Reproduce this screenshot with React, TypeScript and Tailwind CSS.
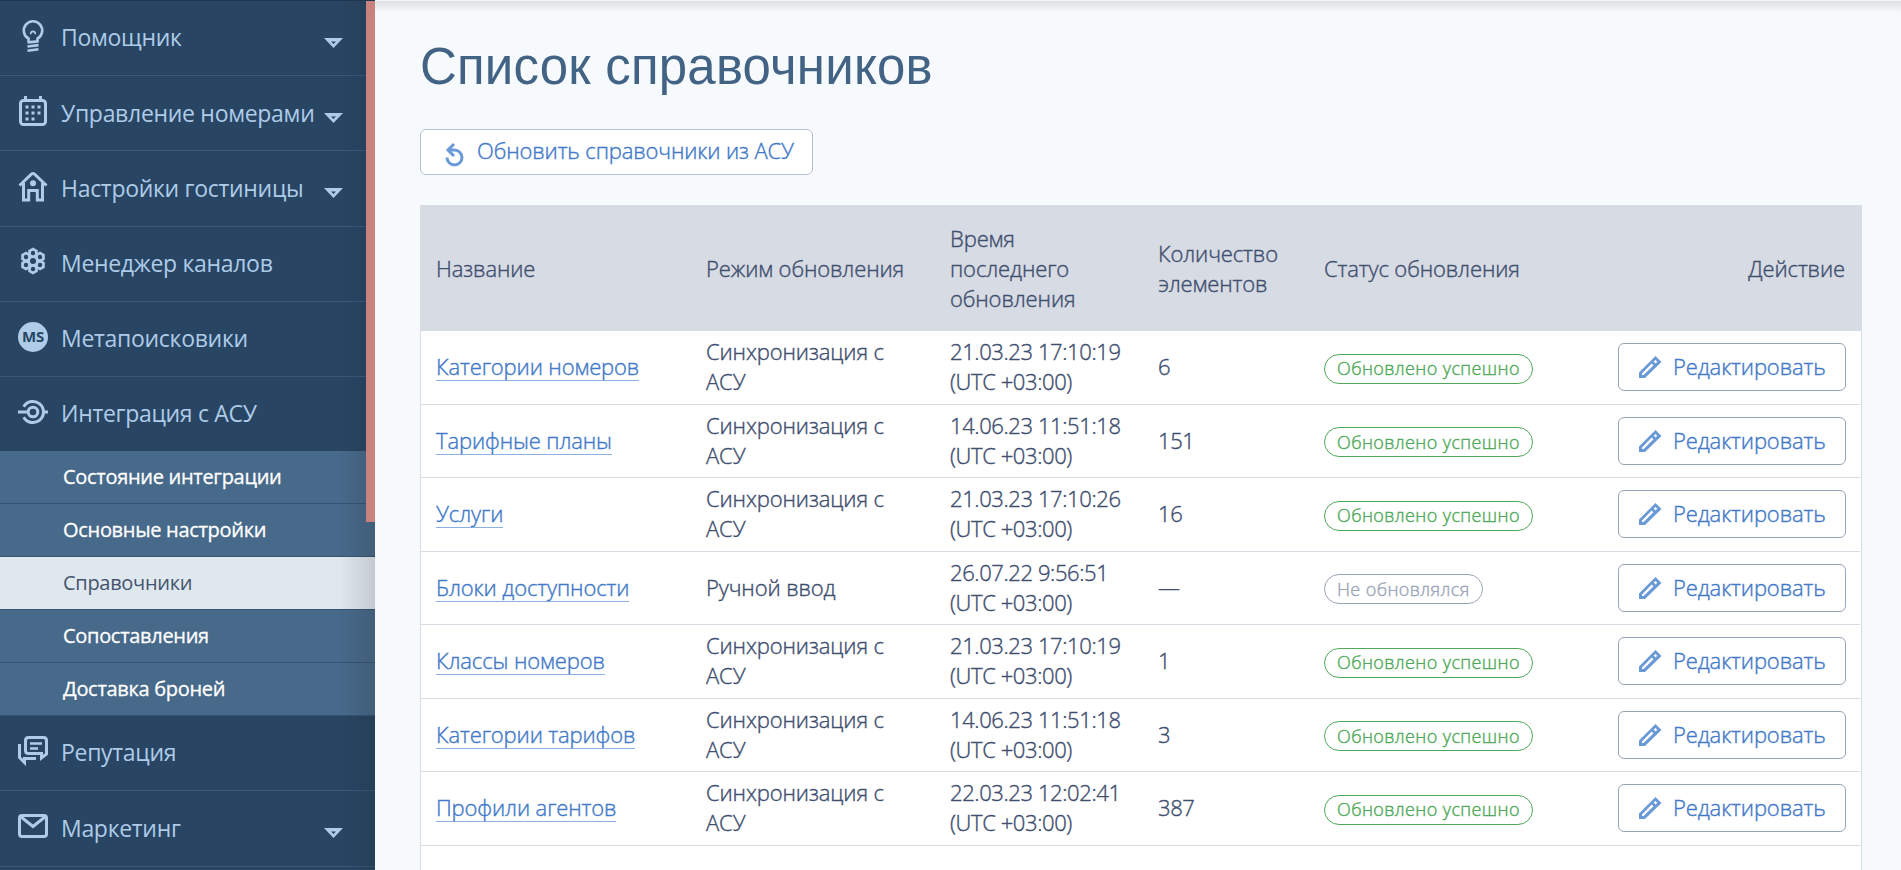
import { type ReactNode } from "react";

interface MenuItem {
  label: string;
  icon: ReactNode;
  arrow?: boolean;
}

interface Directory {
  name: string;
  mode: string;
  date: string;
  count: string;
  updated: boolean;
}

const TOP_MENU: MenuItem[] = [
  { label: "Помощник", icon: <BulbIcon />, arrow: true },
  { label: "Управление номерами", icon: <CalendarIcon />, arrow: true },
  { label: "Настройки гостиницы", icon: <HouseIcon />, arrow: true },
  { label: "Менеджер каналов", icon: <HoneycombIcon /> },
  { label: "Метапоисковики", icon: <MetaIcon /> },
  { label: "Интеграция с АСУ", icon: <IntegrationIcon /> },
];

const SUB_MENU = [
  "Состояние интеграции",
  "Основные настройки",
  "Справочники",
  "Сопоставления",
  "Доставка броней",
];

const BOTTOM_MENU: MenuItem[] = [
  { label: "Репутация", icon: <ChatIcon /> },
  { label: "Маркетинг", icon: <MailIcon />, arrow: true },
];

const DIRECTORIES: Directory[] = [
  { name: "Категории номеров", mode: "Синхронизация с АСУ", date: "21.03.23 17:10:19", count: "6", updated: true },
  { name: "Тарифные планы", mode: "Синхронизация с АСУ", date: "14.06.23 11:51:18", count: "151", updated: true },
  { name: "Услуги", mode: "Синхронизация с АСУ", date: "21.03.23 17:10:26", count: "16", updated: true },
  { name: "Блоки доступности", mode: "Ручной ввод", date: "26.07.22 9:56:51", count: "—", updated: false },
  { name: "Классы номеров", mode: "Синхронизация с АСУ", date: "21.03.23 17:10:19", count: "1", updated: true },
  { name: "Категории тарифов", mode: "Синхронизация с АСУ", date: "14.06.23 11:51:18", count: "3", updated: true },
  { name: "Профили агентов", mode: "Синхронизация с АСУ", date: "22.03.23 12:02:41", count: "387", updated: true },
];

// centres of the honeycomb cells
const CELLS = [[15, 15], [15, 7], [15, 23], [8, 11], [22, 11], [8, 19], [22, 19]];

const COLUMNS = "grid grid-cols-[270px_244px_208px_166px_1fr] items-center";

function BulbIcon() {
  return (
    <svg width="30" height="34" viewBox="0 -1 30 34" fill="none" stroke="#aecbe8" strokeWidth="2.6">
      <path d="M10.5 21.5v-3A9.2 9.2 0 1 1 19.5 18.5v3" />
      <path d="M9.5 22.4l11-1M9.5 26.5l11-1.4M9.5 30.8l11-1.6" />
      <path d="M12.8 14.3c-.8-4 5.2-4 4.4 0" strokeWidth="1.8" />
    </svg>
  );
}

function CalendarIcon() {
  return (
    <svg width="30" height="30" viewBox="0 0 30 30" fill="none" stroke="#aecbe8" strokeWidth="3">
      <rect x="2.5" y="4.5" width="25" height="24" rx="3" />
      <path d="M7.5 0v4M22.5 0v4" />
      <path d="M7.5 11h16M7.5 17h16M7.5 23h10" strokeDasharray="3 3" />
    </svg>
  );
}

function HouseIcon() {
  return (
    <svg width="30" height="32" viewBox="0 0 30 32" fill="none" stroke="#aecbe8" strokeWidth="3">
      <path d="M1.5 15.5L13.4 4.2q1.6-1.3 3.2 0L28.5 15.5" />
      <path d="M5.5 13v17h5.2V20.5h8.6V30h5.2V13" />
      <circle cx="15" cy="13.2" r="3" fill="#aecbe8" stroke="none" />
    </svg>
  );
}

function HoneycombIcon() {
  return (
    <svg width="30" height="32" viewBox="0 0 30 32">
      {CELLS.map(([x, y]) => (
        <path key={`${x}-${y}`} fill="#aecbe8" d={`M${x} ${y - 5.6}l4.8 2.8v5.6l-4.8 2.8-4.8-2.8v-5.6z`} />
      ))}
      {CELLS.map(([x, y], i) => (
        <circle key={`${x}-${y}`} cx={x} cy={y} r={i === 0 ? 3 : 2.2} fill="#284563" />
      ))}
    </svg>
  );
}

function MetaIcon() {
  return (
    <span className="flex size-[30px] items-center justify-center rounded-full bg-[#aecbe8] text-[15px] leading-none font-bold tracking-[-0.3px] text-[#284563]">
      MS
    </span>
  );
}

function IntegrationIcon() {
  return (
    <svg width="30" height="30" viewBox="0 0 30 30" fill="none" stroke="#aecbe8" strokeWidth="3">
      <path d="M5.7 9.7A10.6 10.6 0 1 1 5.7 20.3" />
      <circle cx="15" cy="15" r="4.8" />
      <path d="M0 15h10M26 15h4" />
    </svg>
  );
}

function ChatIcon() {
  return (
    <svg width="30" height="30" viewBox="0 0 30 30" fill="none" stroke="#aecbe8" strokeWidth="3">
      <path d="M10.5 1.5h15q3 0 3 3v13.5l-5 4v-4.5h-13q-3 0-3-3v-10q0-3 3-3z" />
      <path d="M12 7.5h12M12 12.5h8" strokeWidth="2.6" />
      <path d="M1.5 8v13.5l5 5v-4H18" />
    </svg>
  );
}

function MailIcon() {
  return (
    <svg width="30" height="24" viewBox="0 0 30 24" fill="none" stroke="#aecbe8" strokeWidth="3">
      <rect x="1.5" y="1.5" width="27" height="21" rx="2.5" />
      <path d="M2.5 2.5L15 12.5 27.5 2.5" />
    </svg>
  );
}

function RefreshIcon() {
  return (
    <svg width="20" height="26" viewBox="0 0 20 26" fill="none" stroke="#6a99d8" strokeWidth="3">
      <path d="M2 15.5A7.5 7.5 0 1 0 9.5 8H3" />
      <path d="M9 2L3 8l6 6" />
    </svg>
  );
}

function PencilIcon() {
  return (
    <svg width="24" height="24" viewBox="0 0 24 24">
      <path
        fill="#6a99d8"
        fillRule="evenodd"
        d="M1 17.5L17.5 1 23.5 7 7 23H1zM4 18.5V20h1.6L15.5 10.3 13.7 8.5zM17.5 4.9L15.7 6.6 17.5 8.4 19.3 6.7z"
      />
    </svg>
  );
}

function MenuRow({ item }: { item: MenuItem }) {
  return (
    <div className="flex h-[75.2px] items-center border-b border-[#3a5878] pr-8 pb-[3px] pl-[18px]">
      <span className="mb-px flex w-[30px] shrink-0 items-center justify-center">{item.icon}</span>
      <span className="mt-0.5 ml-[13px] text-[23px] tracking-[-0.3px] whitespace-nowrap text-[#aecbe8]">{item.label}</span>
      {item.arrow && (
        <svg className="mt-3 ml-auto shrink-0" width="19" height="10" viewBox="0 0 19 10">
          <path fill="#aecbe8" fillRule="evenodd" d="M0 0h19L9.5 10zM7 3.5l2.5 2.5L12 3.5z" />
        </svg>
      )}
    </div>
  );
}

function Sidebar() {
  return (
    <aside className="relative w-[375px] shrink-0 overflow-hidden border-t border-[#20364e] bg-[#284563]">
      {TOP_MENU.map((item) => (
        <MenuRow key={item.label} item={item} />
      ))}
      <div className="-mt-px">
        {SUB_MENU.map((label) => (
          <div
            key={label}
            className={`flex h-[53px] items-center border-b border-[#355474] pl-[63px] text-[20px] tracking-[-0.3px] ${
              label === "Справочники"
                ? "bg-[#e0e8ef] text-[#45546e]"
                : "bg-[#47698a] text-white [-webkit-text-stroke:0.3px]"
            }`}
          >
            {label}
          </div>
        ))}
      </div>
      {BOTTOM_MENU.map((item) => (
        <MenuRow key={item.label} item={item} />
      ))}
      {/* edge shadow and scroll thumb */}
      <div className="absolute inset-y-0 right-0 w-9 bg-gradient-to-l from-[#202020]/15 to-transparent" />
      <div className="absolute top-0 right-0 h-[521px] w-[9px] bg-[#c9837f]" />
    </aside>
  );
}

function StatusBadge({ updated }: { updated: boolean }) {
  return (
    <span
      className={`mt-[3px] inline-flex h-[30px] items-center rounded-full border px-3 pb-px text-[18px] tracking-[0.4px] ${
        updated ? "border-[#4fa95a] text-[#4fa95a]" : "border-[#9aa5b8] text-[#9aa5b8]"
      }`}
    >
      {updated ? "Обновлено успешно" : "Не обновлялся"}
    </span>
  );
}

export default function App() {
  return (
    <div className="flex h-[870px] w-full overflow-hidden bg-[#f6fafd] font-['Open_Sans',sans-serif]">
      <Sidebar />
      <main className="relative flex-1 border-t border-[#f4f5f6] pr-[39px] pl-[45px]">
        <div className="absolute inset-x-0 top-0 h-3 bg-gradient-to-b from-[#dde1e3] to-transparent" />
        <h1 className="pt-[36px] font-['Liberation_Sans',sans-serif] text-[51px] leading-[60px] tracking-[0.2px] whitespace-nowrap text-[#426384]">
          Список справочников
        </h1>
        <button className="mt-[32px] flex h-[46px] w-[393px] items-center rounded-md border border-[#b3c1d6] bg-white pl-6 text-[22px] font-light tracking-[-0.13px] text-[#4279c8] [-webkit-text-stroke:0.4px]">
          <span className="mt-1.5">
            <RefreshIcon />
          </span>
          <span className="ml-3 pb-[3px] whitespace-nowrap">Обновить справочники из АСУ</span>
        </button>

        <div className="mt-[30px] h-[700px] border border-[#d7dbe3] bg-white text-[22px] leading-[30px] font-light tracking-[-0.12px] text-[#3f4f70] [-webkit-text-stroke:0.4px]">
          <div className={`${COLUMNS} h-[125px] bg-[#d7dbe3] pr-4 pb-0.5 pl-[15px]`}>
            <span>Название</span>
            <span>Режим обновления</span>
            <span className="w-40">Время последнего обновления</span>
            <span className="w-40">Количество элементов</span>
            <span className="flex justify-between">
              <span>Статус обновления</span>
              <span>Действие</span>
            </span>
          </div>
          {DIRECTORIES.map((row) => (
            <div key={row.name} className={`${COLUMNS} mr-px h-[73.5px] border-b border-[#d7dbe3] pr-[14px] pl-[15px]`}>
              <span className="pb-0.5">
                <a className="inline-block border-b border-[#8db0e2] leading-[28px] whitespace-nowrap text-[#4279c8]">{row.name}</a>
              </span>
              <span className="w-[200px] pb-0.5">{row.mode}</span>
              <span className="pb-0.5 tracking-[-0.4px] whitespace-nowrap">
                {row.date}
                <br />
                (UTC +03:00)
              </span>
              <span className="pb-0.5 tracking-[-0.4px]">{row.count}</span>
              <span className="flex items-center justify-between">
                <StatusBadge updated={row.updated} />
                <button className="flex h-12 w-[228px] items-center rounded-md border border-[#98a5b9] pl-[19px] text-[#4279c8]">
                  <PencilIcon />
                  <span className="ml-[11px] pb-0.5">Редактировать</span>
                </button>
              </span>
            </div>
          ))}
        </div>
      </main>
    </div>
  );
}
